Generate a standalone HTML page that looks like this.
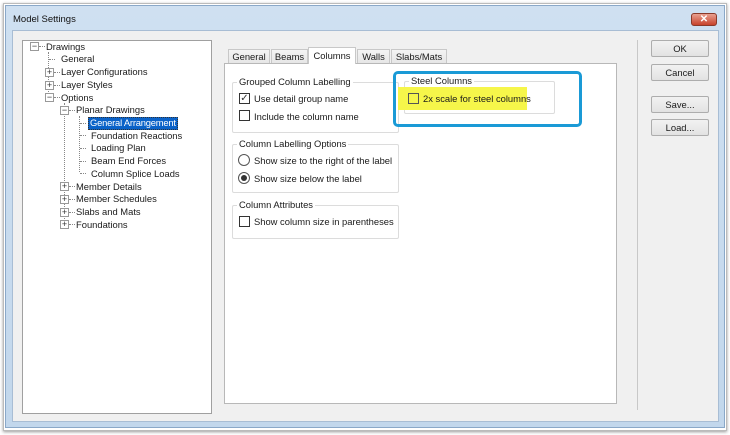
<!DOCTYPE html>
<html><head><style>
*{margin:0;padding:0;box-sizing:border-box}
body{width:730px;height:435px;background:#fff;font-family:"Liberation Sans",sans-serif;font-size:9.4px;color:#1a1a1a;position:relative;overflow:hidden}
.a{position:absolute}
.t{position:absolute;white-space:nowrap;line-height:12px}
.grp{position:absolute;border:1px solid #dcdcdc;border-radius:2px}
.gl{position:absolute;background:#fff;padding:0 2px;white-space:nowrap;line-height:12px;top:-7px;left:4px}
.cb{position:absolute;width:11px;height:11px;border:1px solid #333;background:#fff}
.rb{position:absolute;width:12px;height:12px;border:1px solid #555;border-radius:50%;background:#fff}
.btn{position:absolute;left:651px;width:58px;height:17px;border:1px solid #adadad;background:linear-gradient(#f2f2f2,#e2e2e2);text-align:center;line-height:15px;border-radius:2px}
.tab{position:absolute;top:49px;height:14px;border:1px solid #c8c8c8;border-bottom:none;background:linear-gradient(#f4f4f4,#e6e6e6);text-align:center;line-height:13px}
.pm{position:absolute;width:9px;height:9px;border:1px solid #999;background:#fff;font-size:9px;line-height:7px;text-align:center;color:#333}
.dl{position:absolute;border-left:1px dotted #888}
.dh{position:absolute;border-top:1px dotted #888;width:6px}
</style></head><body>
<div class="a" style="left:3px;top:3px;width:724px;height:428px;border:1px solid #bbb;box-shadow:0 1px 3px #999"></div>
<div class="a" style="left:5px;top:5px;width:720px;height:423px;background:linear-gradient(#cfe0f1,#c2d7ec);border:1px solid #8aa8c8"></div>
<div class="t" style="left:13px;top:14px;font-size:9.5px;color:#111">Model Settings</div>
<div class="a" style="left:691px;top:13px;width:26px;height:13px;background:linear-gradient(#e8a090,#c7432c);border:1px solid #8a3a2a;border-radius:3px;color:#fff;font-size:10px;text-align:center;line-height:11px;font-weight:bold">✕</div>
<div class="a" style="left:12px;top:30px;width:707px;height:392px;background:#f0f0f0;border:1px solid #a8bdd4"></div>
<!-- tree -->
<div class="a" style="left:22px;top:40px;width:190px;height:374px;background:#fff;border:1px solid #a0a0a0"></div>
<div class="dl" style="left:48px;top:52px;height:46px"></div>
<div class="dl" style="left:64px;top:103px;height:124px"></div>
<div class="dl" style="left:79px;top:116px;height:56px"></div>
<div class="pm" style="left:30px;top:42px">−</div><div class="dh" style="left:39px;top:46px"></div>
<div class="t" style="left:46px;top:41px">Drawings</div>
<div class="dh" style="left:49px;top:59px"></div><div class="t" style="left:61px;top:53px">General</div>
<div class="pm" style="left:45px;top:68px">+</div><div class="dh" style="left:54px;top:72px"></div><div class="t" style="left:61px;top:66px">Layer Configurations</div>
<div class="pm" style="left:45px;top:81px">+</div><div class="dh" style="left:54px;top:85px"></div><div class="t" style="left:61px;top:79px">Layer Styles</div>
<div class="pm" style="left:45px;top:93px">−</div><div class="dh" style="left:54px;top:97px"></div><div class="t" style="left:61px;top:92px">Options</div>
<div class="pm" style="left:60px;top:106px">−</div><div class="dh" style="left:69px;top:110px"></div><div class="t" style="left:76px;top:104px">Planar Drawings</div>
<div class="dh" style="left:80px;top:123px"></div><div class="a" style="left:88px;top:117px;width:90px;height:13px;background:#0a62c8;border:1px dotted #333"></div><div class="t" style="left:90px;top:117px;color:#fff;letter-spacing:-0.2px">General Arrangement</div>
<div class="dh" style="left:80px;top:135px"></div><div class="t" style="left:91px;top:130px">Foundation Reactions</div>
<div class="dh" style="left:80px;top:148px"></div><div class="t" style="left:91px;top:142px">Loading Plan</div>
<div class="dh" style="left:80px;top:161px"></div><div class="t" style="left:91px;top:155px">Beam End Forces</div>
<div class="dh" style="left:80px;top:173px"></div><div class="t" style="left:91px;top:168px">Column Splice Loads</div>
<div class="pm" style="left:60px;top:182px">+</div><div class="dh" style="left:69px;top:186px"></div><div class="t" style="left:76px;top:181px">Member Details</div>
<div class="pm" style="left:60px;top:195px">+</div><div class="dh" style="left:69px;top:199px"></div><div class="t" style="left:76px;top:193px">Member Schedules</div>
<div class="pm" style="left:60px;top:208px">+</div><div class="dh" style="left:69px;top:212px"></div><div class="t" style="left:76px;top:206px">Slabs and Mats</div>
<div class="pm" style="left:60px;top:220px">+</div><div class="dh" style="left:69px;top:224px"></div><div class="t" style="left:76px;top:219px">Foundations</div>
<!-- tabs -->
<div class="a" style="left:224px;top:63px;width:393px;height:341px;background:#fff;border:1px solid #b8b8b8"></div>
<div class="tab" style="left:228px;width:42px">General</div>
<div class="tab" style="left:271px;width:37px">Beams</div>
<div class="tab" style="left:357px;width:33px">Walls</div>
<div class="tab" style="left:391px;width:56px">Slabs/Mats</div>
<div class="tab" style="left:308px;top:47px;height:17px;width:48px;background:#fff;line-height:16px">Columns</div>
<div class="grp" style="left:232px;top:82px;width:167px;height:51px"><div class="gl">Grouped Column Labelling</div></div>
<div class="cb" style="left:239px;top:93px;font-size:10px;line-height:9px;text-align:center;color:#333">✓</div><div class="t" style="left:254px;top:93px">Use detail group name</div>
<div class="cb" style="left:239px;top:110px"></div><div class="t" style="left:254px;top:111px">Include the column name</div>
<div class="grp" style="left:232px;top:144px;width:167px;height:49px"><div class="gl">Column Labelling Options</div></div>
<div class="rb" style="left:238px;top:154px"></div><div class="t" style="left:254px;top:155px">Show size to the right of the label</div>
<div class="rb" style="left:238px;top:172px"></div><div class="a" style="left:241px;top:175px;width:6px;height:6px;border-radius:50%;background:#333"></div><div class="t" style="left:254px;top:173px">Show size below the label</div>
<div class="grp" style="left:232px;top:205px;width:167px;height:34px"><div class="gl">Column Attributes</div></div>
<div class="cb" style="left:239px;top:216px"></div><div class="t" style="left:254px;top:216px">Show column size in parentheses</div>
<div class="grp" style="left:404px;top:81px;width:151px;height:33px"><div class="gl">Steel Columns</div></div>
<div class="a" style="left:398px;top:87px;width:129px;height:23px;background:#f6f64a"></div>
<div class="cb" style="left:408px;top:93px;border-color:#555;background:transparent"></div><div class="t" style="left:423px;top:93px">2x scale for steel columns</div>
<div class="a" style="left:393px;top:71px;width:189px;height:56px;border:3px solid #1a9ad6;border-radius:5px"></div>
<div class="a" style="left:637px;top:40px;width:1px;height:370px;background:#c8c8c8"></div>
<div class="btn" style="top:40px">OK</div>
<div class="btn" style="top:64px">Cancel</div>
<div class="btn" style="top:96px">Save...</div>
<div class="btn" style="top:119px">Load...</div>
</body></html>
